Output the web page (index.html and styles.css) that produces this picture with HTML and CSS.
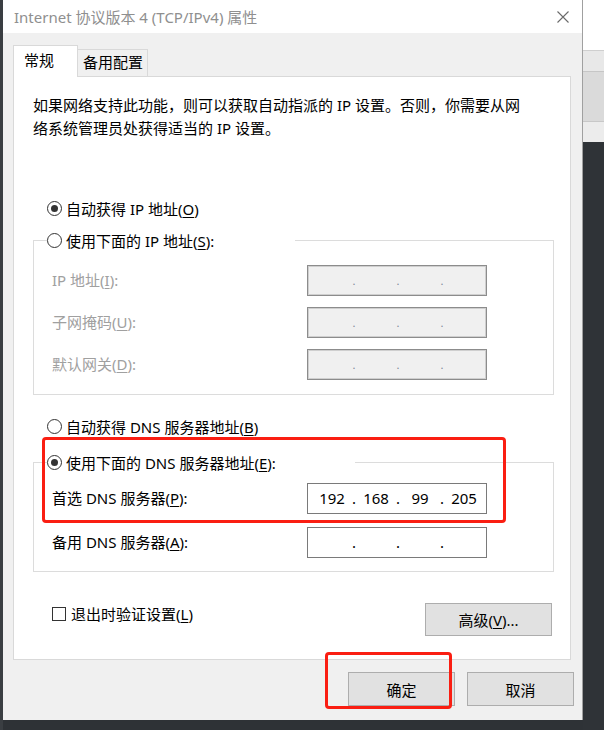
FILE: index.html
```html
<!DOCTYPE html>
<html lang="zh-CN">
<head>
<meta charset="utf-8">
<title>Internet 协议版本 4 (TCP/IPv4) 属性</title>
<link rel="stylesheet" href="styles.css">
</head>
<body>
<div class="screen">
  <div class="edge-left"></div>
  <div class="window">
    <div class="titlebar">
      <span class="title">Internet 协议版本 4 (TCP/IPv4) 属性</span>
      <svg class="close" width="12" height="12" viewBox="0 0 12 12"><path d="M0.5 0.5 L11.5 11.5 M11.5 0.5 L0.5 11.5" stroke="#6a6a6a" stroke-width="1.1" fill="none"/></svg>
    </div>
    <div class="client">
      <div class="tabs">
        <div class="tab active">常规</div>
        <div class="tab">备用配置</div>
      </div>
      <div class="panel">
        <p class="desc">如果网络支持此功能，则可以获取自动指派的 IP 设置。否则，你需要从网<br>络系统管理员处获得适当的 IP 设置。</p>
        <div class="radio-row r1"><span class="radio checked"></span><span>自动获得 IP 地址(<u>O</u>)</span></div>
        <fieldset class="group ip-group">
          <legend class="legend legend-ip"><span class="radio"></span><span>使用下面的 IP 地址(<u>S</u>):</span></legend>
          <div class="field-row">
            <span class="field-label dim">IP 地址(<u>I</u>):</span>
            <div class="ipbox disabled"><span class="oct"></span><span class="dot">.</span><span class="oct"></span><span class="dot">.</span><span class="oct"></span><span class="dot">.</span><span class="oct"></span></div>
          </div>
          <div class="field-row">
            <span class="field-label dim">子网掩码(<u>U</u>):</span>
            <div class="ipbox disabled"><span class="oct"></span><span class="dot">.</span><span class="oct"></span><span class="dot">.</span><span class="oct"></span><span class="dot">.</span><span class="oct"></span></div>
          </div>
          <div class="field-row">
            <span class="field-label dim">默认网关(<u>D</u>):</span>
            <div class="ipbox disabled"><span class="oct"></span><span class="dot">.</span><span class="oct"></span><span class="dot">.</span><span class="oct"></span><span class="dot">.</span><span class="oct"></span></div>
          </div>
        </fieldset>
        <div class="radio-row r3"><span class="radio"></span><span>自动获得 DNS 服务器地址(<u>B</u>)</span></div>
        <fieldset class="group dns-group">
          <legend class="legend legend-dns"><span class="radio checked"></span><span>使用下面的 DNS 服务器地址(<u>E</u>):</span></legend>
          <div class="field-row">
            <span class="field-label">首选 DNS 服务器(<u>P</u>):</span>
            <div class="ipbox"><span class="oct">192</span><span class="dot">.</span><span class="oct">168</span><span class="dot">.</span><span class="oct">99</span><span class="dot">.</span><span class="oct">205</span></div>
          </div>
          <div class="field-row second">
            <span class="field-label">备用 DNS 服务器(<u>A</u>):</span>
            <div class="ipbox"><span class="oct"></span><span class="dot">.</span><span class="oct"></span><span class="dot">.</span><span class="oct"></span><span class="dot">.</span><span class="oct"></span></div>
          </div>
        </fieldset>
        <div class="check-row">
          <div class="check-label"><span class="checkbox"></span><span>退出时验证设置(<u>L</u>)</span></div>
          <div class="btn btn-adv">高级(<u>V</u>)...</div>
        </div>
      </div>
      <div class="footer">
        <div class="btn btn-dlg">确定</div>
        <div class="btn btn-dlg">取消</div>
      </div>
    </div>
  </div>
  <div class="edge-right">
    <div class="er-a"></div>
    <div class="er-b"></div>
    <div class="er-c"></div>
    <div class="er-d"></div>
    <div class="er-e"></div>
  </div>
  <div class="mark mark-dns"></div>
  <div class="mark mark-ok"></div>
</div>
</body>
</html>
```

FILE: styles.css
```css
* { box-sizing: border-box; }
html, body { margin: 0; padding: 0; }
body {
  width: 604px;
  height: 730px;
  overflow: hidden;
  background: #2e3236;
  font-family: "Noto Sans", "Noto Sans CJK SC", sans-serif;
  font-size: 15px;
  color: #000;
}
u { text-underline-offset: 2px; text-decoration-thickness: 1px; }

.screen { position: relative; display: flex; height: 730px; }
.edge-left { width: 3px; height: 730px; background: #3a3e42; }

.window {
  width: 580px;
  height: 720px;
  background: #f0f0f0;
  border-right: 1px solid #a0a0a0;
  display: flex;
  flex-direction: column;
}
.titlebar {
  height: 33px;
  background: #fff;
  display: flex;
  align-items: center;
  justify-content: space-between;
  padding: 0 13px 0 11px;
}
.title { color: #8f8f8f; font-size: 15px; line-height: 20px; white-space: nowrap; }
.close { display: block; }

.client { padding: 12px 11px 0 10px; }
.tabs { display: flex; align-items: flex-end; height: 31px; }
.tab {
  height: 27px;
  border: 1px solid #d9d9d9;
  border-bottom: none;
  background: #f0f0f0;
  line-height: 24px;
  padding: 0 4px 0 5px;
  margin-left: -1px;
  white-space: nowrap;
}
.tab.active {
  position: relative;
  z-index: 1;
  height: 32px;
  width: 65px;
  margin-left: 0;
  margin-bottom: -1px;
  background: #fff;
  line-height: 28px;
  padding-left: 10px;
}

.panel {
  height: 584px;
  background: #fff;
  border: 1px solid #d9d9d9;
}
.desc { margin: 17px 0 0 19px; line-height: 23px; white-space: nowrap; }

.radio-row { display: flex; align-items: center; gap: 4px; height: 23px; margin-left: 33px; white-space: nowrap; }
.radio-row.r1 { margin-top: 57px; }
.radio-row.r3 { margin-top: 20px; }

.radio {
  position: relative;
  width: 15px;
  height: 15px;
  border: 1px solid #333;
  border-radius: 50%;
  background: #fff;
  flex: none;
}
.radio.checked::after {
  content: "";
  position: absolute;
  left: 3px;
  top: 3px;
  width: 7px;
  height: 7px;
  border-radius: 50%;
  background: #333;
}

.group {
  margin: 0 16px 0 19px;
  border: 1px solid #dcdcdc;
  min-width: 0;
}
.ip-group { margin-top: 9px; padding: 13px 0 14px 18px; }
.dns-group { margin-top: 13px; padding: 9px 0 13px 18px; }
.legend {
  display: flex;
  align-items: center;
  gap: 4px;
  height: 23px;
  padding: 0;
  margin-left: -5px;
  background: #fff;
  white-space: nowrap;
}
.legend-ip { width: 248px; }
.legend-dns { width: 308px; }

.field-row {
  display: grid;
  grid-template-columns: 255px 180px;
  align-items: center;
  height: 31px;
  margin-top: 11px;
}
.field-row:first-of-type { margin-top: 0; }
.dns-group .field-row.second { margin-top: 13px; }
.field-label { line-height: 23px; white-space: nowrap; }
.dim { color: #a0a0a0; }

.ipbox {
  height: 31px;
  border: 1px solid #7a7a7a;
  background: #fff;
  display: flex;
  align-items: center;
  padding-left: 4px;
  line-height: 23px;
}
.ipbox.disabled {
  background: #f0f0f0;
  border-color: #8c8c8c;
  box-shadow: inset 0 0 0 1px #cfcfcf;
}
.oct { width: 40px; text-align: center; }
.dot { width: 4px; text-align: center; }
.ipbox.disabled .dot { color: #7d8898; font-size: 11px; }

.check-row {
  display: flex;
  justify-content: space-between;
  align-items: flex-start;
  margin: 31px 18px 0 38px;
}
.check-label { display: flex; align-items: center; gap: 5px; height: 23px; margin-top: -1px; white-space: nowrap; }
.checkbox { width: 14px; height: 14px; border: 1px solid #333; background: #fff; flex: none; }

.btn {
  background: #e1e1e1;
  border: 1px solid #adadad;
  display: flex;
  align-items: center;
  justify-content: center;
  white-space: nowrap;
}
.btn-adv { width: 127px; height: 33px; }
.footer {
  display: flex;
  justify-content: flex-end;
  gap: 12px;
  padding: 12px 8px 0 0;
  margin-right: -11px;
}
.btn-dlg { width: 107px; height: 34px; }

.edge-right {
  width: 21px;
  display: flex;
  flex-direction: column;
  box-shadow: inset 5px 0 5px -3px rgba(0,0,0,0.18);
}
.er-a { height: 51px; background: #fff; border-bottom: 1px solid #cfcfcf; }
.er-b { height: 21px; background: #e8e8e8; border-bottom: 1px solid #c6c6c6; }
.er-c { height: 50px; background: #dadada; border-bottom: 1px solid #c8c8c8; }
.er-d { height: 20px; background: #ececec; }
.er-e { flex: 1; background: #2f3337; }

.mark {
  position: absolute;
  border: 3px solid #fa1e12;
  border-radius: 4px;
}
.mark-dns { left: 42px; top: 437px; width: 464px; height: 86px; }
.mark-ok { left: 325px; top: 652px; width: 127px; height: 57px; }
```
